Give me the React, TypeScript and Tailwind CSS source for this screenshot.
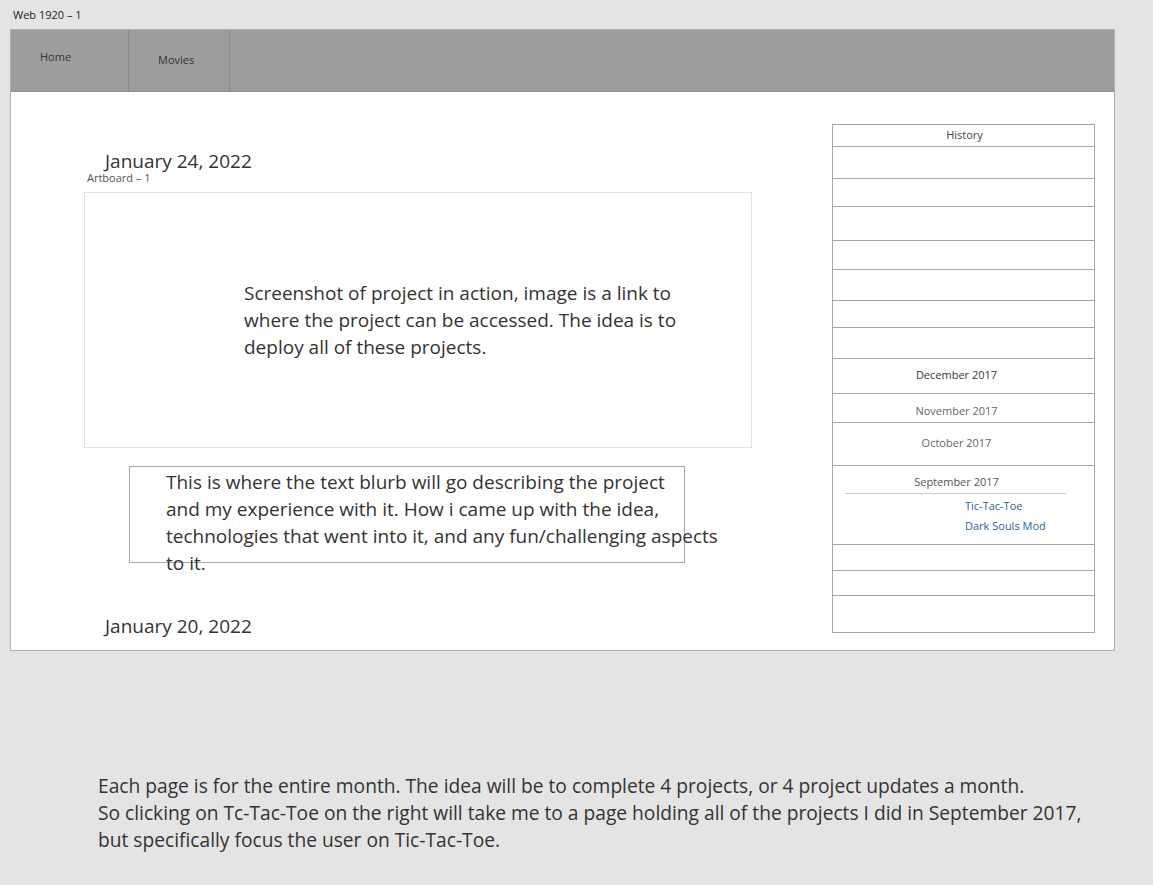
import React from 'react';

const historyRows: { h: string; label?: string; tone?: string; pt?: string }[] = [
  { h: 'h-[32px]' },
  { h: 'h-[28px]' },
  { h: 'h-[34px]' },
  { h: 'h-[29px]' },
  { h: 'h-[31px]' },
  { h: 'h-[27px]' },
  { h: 'h-[31px]' },
  { h: 'h-[35px]', label: 'December 2017', tone: 'text-[#3a3a3a]', pt: 'pt-[9px]' },
  { h: 'h-[29px]', label: 'November 2017', tone: 'text-[#666]', pt: 'pt-[10px]' },
  { h: 'h-[43px]', label: 'October 2017', tone: 'text-[#666]', pt: 'pt-[13px]' },
];

const HistoryPanel = () => {
  return (
    <div className="mt-[32px] w-[263px] self-start border border-[#a6a6a6] divide-y divide-[#a6a6a6] bg-white text-[11px] leading-[14px]">
      <div className="h-[22px] pl-[2px] pt-[3px] text-center text-[#444]">History</div>
      {historyRows.map((row, i) => (
        <div key={i} className={`${row.h} ${row.pt ?? ''} pr-[14px] text-center ${row.tone ?? ''}`}>
          {row.label}
        </div>
      ))}
      {/* September - expanded */}
      <div className="h-[79px] pt-[9px]">
        <div className="pr-[14px] text-center text-[#555]">September 2017</div>
        <div className="ml-[12px] mr-[28px] mt-[4px] h-px bg-[#c8c8c8]" />
        <div className="ml-[132px] mt-[5px] flex flex-col gap-[6px] text-[#2f5f9e]">
          <span>Tic-Tac-Toe</span>
          <span>Dark Souls Mod</span>
        </div>
      </div>
      <div className="h-[26px]" />
      <div className="h-[25px]" />
      <div className="h-[36px]" />
    </div>
  );
};

const App = () => {
  return (
    <div className="min-h-[885px] w-full bg-[#e4e4e4] text-[#333]" style={{ fontFamily: '"Open Sans", sans-serif' }}>
      <div className="h-[29px] pl-[13px] pt-[8px] text-[11px] leading-[14px] text-[#222]">Web 1920 – 1</div>

      {/* Artboard */}
      <div className="ml-[10px] h-[622px] w-[1105px] border border-[#b0b0b0] bg-white">
        {/* Nav bar */}
        <div className="flex h-[62px] border-b border-[#8e8e8e] bg-[#9d9d9d] text-[11px] leading-[14px] text-[#333]">
          <div className="w-[118px] border-r border-[#888] pl-[29px] pt-[20px]">Home</div>
          <div className="w-[101px] border-r border-[#888] pl-[29px] pt-[23px]">Movies</div>
        </div>

        <div className="flex">
          {/* Left column */}
          <div className="w-[821px]">
            <div className="mt-[59px] pl-[94px] text-[19px] leading-[20px] text-[#333]">January 24, 2022</div>
            <div className="mt-[1px] pl-[76px] text-[11px] leading-[12px] text-[#555]">Artboard – 1</div>

            <div className="ml-[73px] mt-[8px] h-[256px] w-[668px] border border-[#e2e2e2] pl-[159px] pt-[87px]">
              <p className="w-[445px] text-[19px] leading-[27px] text-[#333]">
                Screenshot of project in action, image is a link to where the project can be accessed. The idea is to deploy all
                of these projects.
              </p>
            </div>

            <div className="ml-[118px] mt-[18px] h-[97px] w-[556px] border border-[#a8a8a8] pl-[36px] pt-[2px]">
              <p className="w-[580px] text-[19px] leading-[27px] text-[#333]">
                This is where the text blurb will go describing the project
                <br />
                and my experience with it. How i came up with the idea,
                <br />
                technologies that went into it, and any fun/challenging aspects
                <br />
                to it.
              </p>
            </div>

            <div className="mt-[51px] pl-[94px] text-[19px] leading-[24px] text-[#333]">January 20, 2022</div>
          </div>

          <HistoryPanel />
        </div>
      </div>

      <div className="mt-[121px] pl-[98px] text-[19.2px] leading-[27px] text-[#333]">
        <p>Each page is for the entire month. The idea will be to complete 4 projects, or 4 project updates a month.</p>
        <p>So clicking on Tc-Tac-Toe on the right will take me to a page holding all of the projects I did in September 2017,</p>
        <p>but specifically focus the user on Tic-Tac-Toe.</p>
      </div>
    </div>
  );
};

export default App;
